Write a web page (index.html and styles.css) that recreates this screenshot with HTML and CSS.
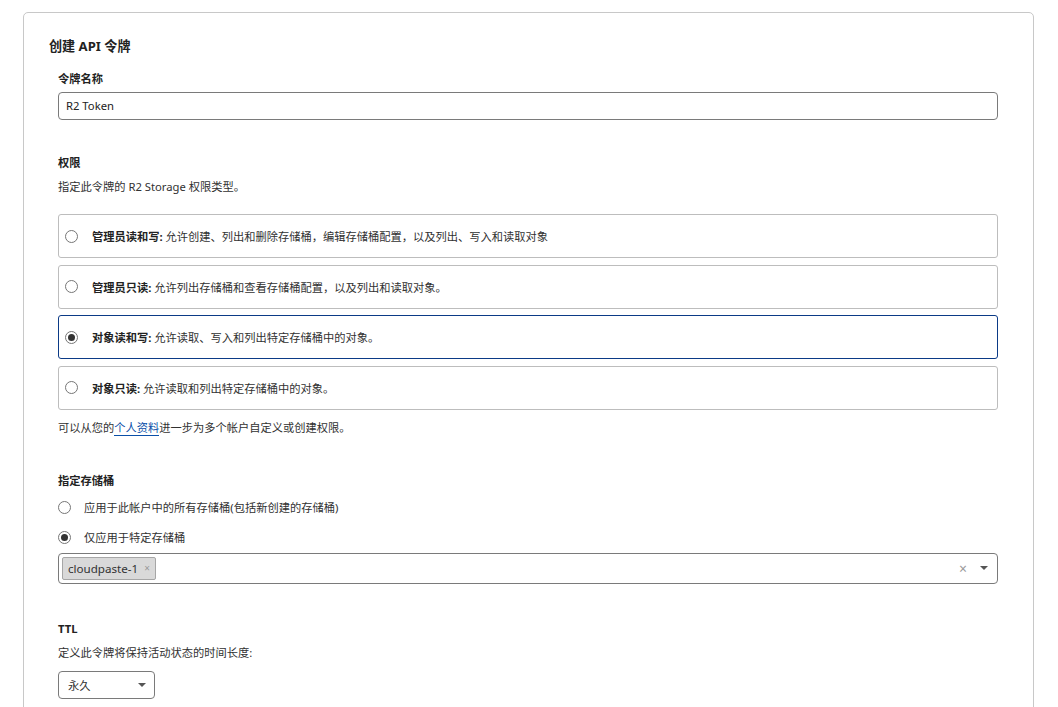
FILE: index.html
```html
<!DOCTYPE html>
<html lang="zh-CN">
<head>
<meta charset="utf-8">
<title>创建 API 令牌</title>
<link rel="stylesheet" href="styles.css">
</head>
<body>
<div class="card">
  <h2 class="title">创建 API 令牌</h2>
  <div class="section">
    <div class="label">令牌名称</div>
    <div class="input">R2 Token</div>

    <div class="label sec-gap">权限</div>
    <div class="desc">指定此令牌的 R2 Storage 权限类型。</div>

    <div class="options">
      <div class="option"><span class="radio"></span><span class="opt-text"><b>管理员读和写:</b> 允许创建、列出和删除存储桶，编辑存储桶配置，以及列出、写入和读取对象</span></div>
      <div class="option"><span class="radio"></span><span class="opt-text"><b>管理员只读:</b> 允许列出存储桶和查看存储桶配置，以及列出和读取对象。</span></div>
      <div class="option selected"><span class="radio checked"></span><span class="opt-text"><b>对象读和写:</b> 允许读取、写入和列出特定存储桶中的对象。</span></div>
      <div class="option"><span class="radio"></span><span class="opt-text"><b>对象只读:</b> 允许读取和列出特定存储桶中的对象。</span></div>
    </div>

    <div class="note">可以从您的<a class="link" href="#">个人资料</a>进一步为多个帐户自定义或创建权限。</div>

    <div class="label sec-gap2">指定存储桶</div>
    <div class="radio-row first"><span class="radio"></span><span>应用于此帐户中的所有存储桶(包括新创建的存储桶)</span></div>
    <div class="radio-row second"><span class="radio checked"></span><span>仅应用于特定存储桶</span></div>
    <div class="multi">
      <span class="tag">cloudpaste-1<span class="tag-x">×</span></span>
      <span class="multi-right"><span class="clear">×</span><span class="caret"></span></span>
    </div>

    <div class="label sec-gap2">TTL</div>
    <div class="desc">定义此令牌将保持活动状态的时间长度:</div>
    <div class="select"><span>永久</span><span class="caret"></span></div>
  </div>
</div>
</body>
</html>
```
FILE: styles.css
```css
html, body {
  margin: 0;
  padding: 0;
  background: #ffffff;
}
body {
  font-family: "Noto Sans", "Noto Sans CJK SC", sans-serif;
  font-size: 11.25px;
  color: #313131;
  height: 707px;
  overflow: hidden;
}
.card {
  margin: 12px 0 0 23px;
  width: 1011px;
  height: 760px;
  border: 1px solid #c8c8c8;
  border-radius: 5px;
  padding: 23px 0 0 25px;
  box-sizing: border-box;
}
.title {
  margin: 0;
  font-size: 13.1px;
  line-height: 20px;
  font-weight: 700;
  color: #222;
}
.section {
  padding-left: 9px;
  width: 940px;
}
.label {
  margin-top: 15px;
  font-weight: 700;
  line-height: 16px;
  font-size: 11.25px;
  color: #222;
}
.sec-gap { margin-top: 35px; }
.sec-gap2 { margin-top: 37px; }
.input {
  margin-top: 5px;
  height: 28px;
  box-sizing: border-box;
  border: 1px solid #7a7a7a;
  border-radius: 4px;
  padding: 0 7px;
  line-height: 26px;
  color: #222;
}
.desc {
  margin-top: 8px;
  line-height: 16px;
}
.options {
  margin-top: 19px;
  display: flex;
  flex-direction: column;
  gap: 6.5px;
}
.option {
  height: 44px;
  box-sizing: border-box;
  border: 1px solid #bdbdbd;
  border-radius: 3px;
  display: flex;
  align-items: center;
  padding-left: 6px;
  gap: 14px;
}
.option.selected {
  border-color: #0b3a86;
}
.opt-text b {
  font-weight: 700;
  color: #222;
}
.radio {
  width: 13px;
  height: 13px;
  box-sizing: border-box;
  border: 1px solid #767676;
  border-radius: 50%;
  background: #fff;
  flex: none;
  display: inline-flex;
  align-items: center;
  justify-content: center;
}
.radio.checked::after {
  content: "";
  width: 7px;
  height: 7px;
  border-radius: 50%;
  background: #333;
}
.note {
  margin-top: 10px;
  line-height: 16px;
}
.link {
  color: #0a4fa8;
  text-decoration: none;
  border-bottom: 1px solid #0a4fa8;
}
.radio-row {
  display: flex;
  align-items: center;
  gap: 13px;
  line-height: 16px;
}
.radio-row.first { margin-top: 11px; }
.radio-row.second { margin-top: 14px; }
.multi {
  margin-top: 7px;
  height: 31px;
  box-sizing: border-box;
  border: 1px solid #7a7a7a;
  border-radius: 4px;
  display: flex;
  align-items: center;
  padding: 0 3px;
}
.tag {
  height: 23px;
  box-sizing: border-box;
  background: #d9d9d9;
  border: 1px solid #a6a6a6;
  border-radius: 2px;
  padding: 0 5px;
  display: inline-flex;
  align-items: center;
  white-space: nowrap;
  font-size: 11.6px;
  color: #333;
}
.tag-x {
  color: #9a9a9a;
  font-size: 10px;
  margin-left: 6px;
}
.multi-right {
  margin-left: auto;
  display: flex;
  align-items: center;
  gap: 13px;
  padding-right: 6px;
}
.clear {
  color: #9a9a9a;
  font-size: 14px;
}
.caret {
  width: 0;
  height: 0;
  border-left: 4px solid transparent;
  border-right: 4px solid transparent;
  border-top: 4px solid #555;
}
.select {
  margin-top: 10px;
  width: 97px;
  height: 28px;
  box-sizing: border-box;
  border: 1px solid #7a7a7a;
  border-radius: 4px;
  display: flex;
  align-items: center;
  justify-content: space-between;
  padding: 0 8px 0 9px;
}
```
